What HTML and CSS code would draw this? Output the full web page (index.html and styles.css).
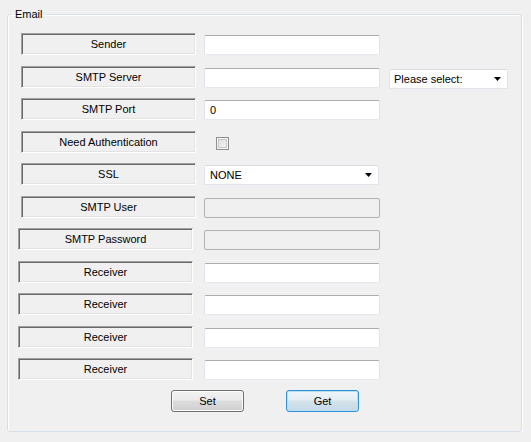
FILE: index.html
```html
<!DOCTYPE html>
<html>
<head>
<meta charset="utf-8">
<link rel="stylesheet" href="styles.css">
</head>
<body>
<fieldset class="group">
  <legend class="group-title">Email</legend>
  <div class="form">
    <div class="row">
      <div class="label">Sender</div>
      <input class="field" type="text">
    </div>
    <div class="row">
      <div class="label">SMTP Server</div>
      <input class="field" type="text">
      <div class="combo combo-small"><span>Please select:</span><svg class="arrow" width="7" height="4" viewBox="0 0 7 4"><path d="M0 0H7L3.5 4Z" fill="#000"/></svg></div>
    </div>
    <div class="row">
      <div class="label">SMTP Port</div>
      <input class="field" type="text" value="0">
    </div>
    <div class="row">
      <div class="label">Need Authentication</div>
      <span class="check"></span>
    </div>
    <div class="row">
      <div class="label">SSL</div>
      <div class="combo"><span>NONE</span><svg class="arrow" width="7" height="4" viewBox="0 0 7 4"><path d="M0 0H7L3.5 4Z" fill="#000"/></svg></div>
    </div>
    <div class="row">
      <div class="label">SMTP User</div>
      <input class="field" type="text" disabled>
    </div>
    <div class="row">
      <div class="label shift">SMTP Password</div>
      <input class="field" type="text" disabled>
    </div>
    <div class="row">
      <div class="label shift">Receiver</div>
      <input class="field" type="text">
    </div>
    <div class="row">
      <div class="label shift">Receiver</div>
      <input class="field" type="text">
    </div>
    <div class="row">
      <div class="label shift">Receiver</div>
      <input class="field" type="text">
    </div>
    <div class="row">
      <div class="label shift">Receiver</div>
      <input class="field" type="text">
    </div>
  </div>
  <div class="actions">
    <button class="btn" type="button">Set</button>
    <button class="btn btn-default" type="button">Get</button>
  </div>
</fieldset>
</body>
</html>
```
FILE: styles.css
```css
html, body {
  margin: 0;
  background: #f0f0f0;
}
body {
  padding: 8px 0 0 7px;
  font-family: "Liberation Sans", Arial, sans-serif;
  font-size: 11px;
  color: #000;
}
.group {
  box-sizing: border-box;
  width: 515px;
  margin: 0;
  padding: 12px 3px 19px 4px;
  border: 1px solid #d5dfe5;
  border-radius: 3px;
  box-shadow: inset 1px 1px 0 #fff, 1px 1px 0 #fff;
}
.group-title {
  padding: 0 3px;
  line-height: 13px;
  font-size: 11px;
}
.form {
  display: flex;
  flex-direction: column;
  gap: 10.5px;
  margin-left: 9px;
}
.row {
  display: flex;
  align-items: flex-end;
  gap: 8px;
  height: 22px;
}
.label {
  box-sizing: border-box;
  width: 175px;
  height: 22px;
  flex: none;
  display: flex;
  align-items: center;
  justify-content: center;
  padding-top: 1px;
  border: 1px solid;
  border-color: #a0a0a0 #ffffff #ffffff #a0a0a0;
  box-shadow: inset 1px 1px 0 #696969, inset -1px -1px 0 #e3e3e3;
  background: #f0f0f0;
  line-height: 13px;
}
.label.shift {
  margin-left: -3px;
  margin-right: 3px;
}
.field {
  box-sizing: border-box;
  width: 176px;
  height: 20px;
  margin: 0;
  padding: 0 5px;
  border: 1px solid;
  border-color: #abadb3 #e2e3ea #e3e9ef #e2e3ea;
  border-radius: 2px;
  background: #fff;
  font-family: inherit;
  font-size: 11px;
  color: #000;
  outline: none;
}
.field:disabled {
  background: #f0f0f0;
  border-color: #adb2b5;
}
.combo {
  box-sizing: border-box;
  width: 175px;
  height: 20px;
  display: flex;
  align-items: center;
  justify-content: space-between;
  padding: 0 6px 0 5px;
  border: 1px solid #e0e3ea;
  border-top-color: #d8dbe2;
  border-radius: 2px;
  background: #fff;
}
.combo-small {
  width: 119px;
  margin-left: 1px;
  margin-bottom: -1px;
  padding-left: 4px;
}
.arrow {
  display: block;
  flex: none;
}
.check {
  box-sizing: border-box;
  width: 13px;
  height: 13px;
  margin: 0 0 3px 12px;
  border: 1px solid #8e8f8f;
  background: linear-gradient(135deg, #dcdcdc, #f6f6f6);
  box-shadow: inset 0 0 0 1px #f4f4f4, inset 0 0 0 2px #c9c9c9;
}
.actions {
  display: flex;
  justify-content: center;
  gap: 42px;
  margin-top: 9.5px;
}
.btn {
  box-sizing: border-box;
  width: 73px;
  height: 22px;
  margin: 0;
  padding: 0;
  border: 1px solid #707070;
  border-radius: 3px;
  background: linear-gradient(#f2f2f2 0%, #ebebeb 45%, #dddddd 50%, #cfcfcf 100%);
  box-shadow: inset 0 0 0 1px #fcfcfc;
  font-family: inherit;
  font-size: 11px;
  color: #000;
}
.btn-default {
  border-color: #2f92d6;
  background: linear-gradient(#eef5f9 0%, #e3eef5 45%, #d3e3ec 50%, #c6d9e4 100%);
  box-shadow: inset 0 0 0 1px #b8e0f7;
}
```
